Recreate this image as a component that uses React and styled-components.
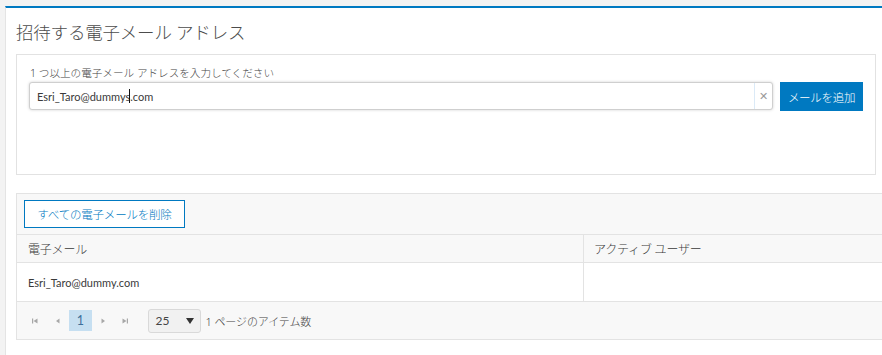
import React from "react";
import styled, { createGlobalStyle } from "styled-components";

const Global = createGlobalStyle`
  html, body { margin: 0; padding: 0; background: #f3f3f3; }
  body { font-family: "Noto Sans", "Noto Sans CJK JP", sans-serif; }
  * { box-sizing: border-box; }
`;

const jp = `"Noto Sans", "Noto Sans CJK JP", sans-serif`;
const latin = `Lato, "Noto Sans CJK JP", sans-serif`;

const Page = styled.div`
  width: 882px;
  height: 355px;
  overflow: hidden;
  padding: 6px 0 0 5px;
  background: #f3f3f3;
`;

const Card = styled.div`
  height: 100%;
  background: #fff;
  border-top: 2px solid #0079c1;
  border-left: 1px solid #e4e4e4;
  padding-left: 10px;
  overflow: hidden;
`;

const Title = styled.h1`
  margin: 0;
  padding-top: 10px;
  height: 46px;
  font-family: ${jp};
  font-weight: 300;
  font-size: 17.5px;
  line-height: 28px;
  color: #4c4c4c;
  letter-spacing: -0.2px;
`;

const Panel = styled.div`
  width: 860px;
  height: 121px;
  border: 1px solid #e2e2e2;
  padding: 10px 12px 0 12px;
`;

const Label = styled.div`
  font-family: ${jp};
  font-weight: 300;
  font-size: 10.6px;
  line-height: 16px;
  color: #444;
  margin-bottom: 1px;
  padding-left: 1px;
`;

const InputRow = styled.div`
  display: flex;
  align-items: flex-start;
  gap: 7px;
`;

const InputBox = styled.div`
  flex: 1;
  height: 28px;
  display: flex;
  align-items: stretch;
  border: 1px solid #cfcfcf;
  border-radius: 3px;
  box-shadow: 0 0 3px rgba(0, 0, 0, 0.18);
  background: #fff;
`;

const InputText = styled.div`
  flex: 1;
  display: flex;
  align-items: center;
  padding-left: 7px;
  font-family: ${latin};
  font-size: 11px;
  color: #3a3a3a;
`;

const Caret = styled.span`
  display: inline-block;
  width: 1px;
  height: 14px;
  background: #111;
  margin: 0 0 0 -1px;
`;

const ClearBtn = styled.div`
  width: 18px;
  border-left: 1px solid #dbeaf7;
  display: flex;
  align-items: center;
  justify-content: center;
  color: #9a9a9a;
  font-family: "DejaVu Sans", sans-serif;
  font-size: 11px;
`;

const PrimaryButton = styled.button`
  width: 83px;
  height: 29px;
  border: none;
  background: #0079c1;
  color: #fff;
  font-family: ${jp};
  font-weight: 300;
  font-size: 11.5px;
  padding: 0;
  letter-spacing: -0.3px;
`;

const Section = styled.div`
  margin-top: 18px;
  width: 900px;
  border: 1px solid #e3e3e3;
  background: #f8f8f8;
`;

const Toolbar = styled.div`
  height: 40px;
  padding: 6px 7px;
`;

const OutlineButton = styled.button`
  width: 161px;
  height: 28px;
  border: 1px solid #0079c1;
  background: #fff;
  color: #0079c1;
  font-family: ${jp};
  font-weight: 300;
  font-size: 11.5px;
  padding: 0;
  letter-spacing: -0.2px;
`;

const Row = styled.div`
  display: grid;
  grid-template-columns: 566px 1fr;
  border-top: 1px solid #e3e3e3;
  height: ${(p) => p.$h}px;
  background: ${(p) => (p.$header ? "#f8f8f8" : "#fff")};
`;

const Cell = styled.div`
  display: flex;
  align-items: center;
  padding-left: ${(p) => (p.$first ? 11 : 10)}px;
  border-left: ${(p) => (p.$first ? "none" : "1px solid #e3e3e3")};
  font-family: ${(p) => (p.$latin ? latin : jp)};
  font-weight: ${(p) => (p.$latin ? 400 : 300)};
  font-size: ${(p) => p.$size}px;
  color: #3a3a3a;
  letter-spacing: ${(p) => (p.$latin ? 0 : -0.2)}px;
`;

const Pager = styled.div`
  border-top: 1px solid #e3e3e3;
  height: 38px;
  display: flex;
  align-items: center;
  padding-left: 7px;
`;

const PageNav = styled.div`
  width: 22.5px;
  height: 21px;
  display: flex;
  align-items: center;
  justify-content: center;
  background: ${(p) => (p.$active ? "#c6dff1" : "transparent")};
  color: #3e6f99;
  font-family: ${latin};
  font-size: 12.5px;
`;

const Select = styled.div`
  margin-left: 11px;
  width: 53px;
  height: 24px;
  border: 1px solid #d9d9d9;
  border-radius: 3px;
  background: #f1f1f1;
  display: flex;
  align-items: center;
  justify-content: space-between;
  padding: 0 6px 0 7px;
  font-family: ${latin};
  font-size: 12px;
  color: #444;
`;

const PagerText = styled.span`
  margin-left: 5px;
  font-family: ${jp};
  font-weight: 300;
  font-size: 11px;
  color: #444;
  letter-spacing: -0.1px;
`;

const NavIcon = ({ kind }) => {
  const c = "#a8a8a8";
  return (
    <svg width="6" height="6" viewBox="0 0 6 6">
      {kind === "first" && (
        <>
          <rect x="0" y="0.5" width="1.2" height="5" fill={c} />
          <polygon points="5.5,0.5 1.5,3 5.5,5.5" fill={c} />
        </>
      )}
      {kind === "prev" && <polygon points="4.5,0.5 1,3 4.5,5.5" fill={c} />}
      {kind === "next" && <polygon points="1.5,0.5 5,3 1.5,5.5" fill={c} />}
      {kind === "last" && (
        <>
          <polygon points="0.5,0.5 4.5,3 0.5,5.5" fill={c} />
          <rect x="4.8" y="0.5" width="1.2" height="5" fill={c} />
        </>
      )}
    </svg>
  );
};

const Arrow = () => (
  <svg width="8" height="6" viewBox="0 0 8 6">
    <polygon points="0,0 8,0 4,6" fill="#333" />
  </svg>
);

export default function App() {
  return (
    <>
      <Global />
      <Page>
        <Card>
          <Title>招待する電子メール アドレス</Title>
          <Panel>
            <Label>1 つ以上の電子メール アドレスを入力してください</Label>
            <InputRow>
              <InputBox>
                <InputText>
                  <span>Esri_Taro@dummys</span>
                  <Caret />
                  <span>.com</span>
                </InputText>
                <ClearBtn>✕</ClearBtn>
              </InputBox>
              <PrimaryButton>メールを追加</PrimaryButton>
            </InputRow>
          </Panel>
          <Section>
            <Toolbar>
              <OutlineButton>すべての電子メールを削除</OutlineButton>
            </Toolbar>
            <Row $header $h={28}>
              <Cell $first $size={12}>電子メール</Cell>
              <Cell $size={12}>アクティブ ユーザー</Cell>
            </Row>
            <Row $h={39}>
              <Cell $first $latin $size={11}>Esri_Taro@dummy.com</Cell>
              <Cell $size={11} />
            </Row>
            <Pager>
              <PageNav><NavIcon kind="first" /></PageNav>
              <PageNav><NavIcon kind="prev" /></PageNav>
              <PageNav $active>1</PageNav>
              <PageNav><NavIcon kind="next" /></PageNav>
              <PageNav><NavIcon kind="last" /></PageNav>
              <Select>
                <span>25</span>
                <Arrow />
              </Select>
              <PagerText>1 ページのアイテム数</PagerText>
            </Pager>
          </Section>
        </Card>
      </Page>
    </>
  );
}
